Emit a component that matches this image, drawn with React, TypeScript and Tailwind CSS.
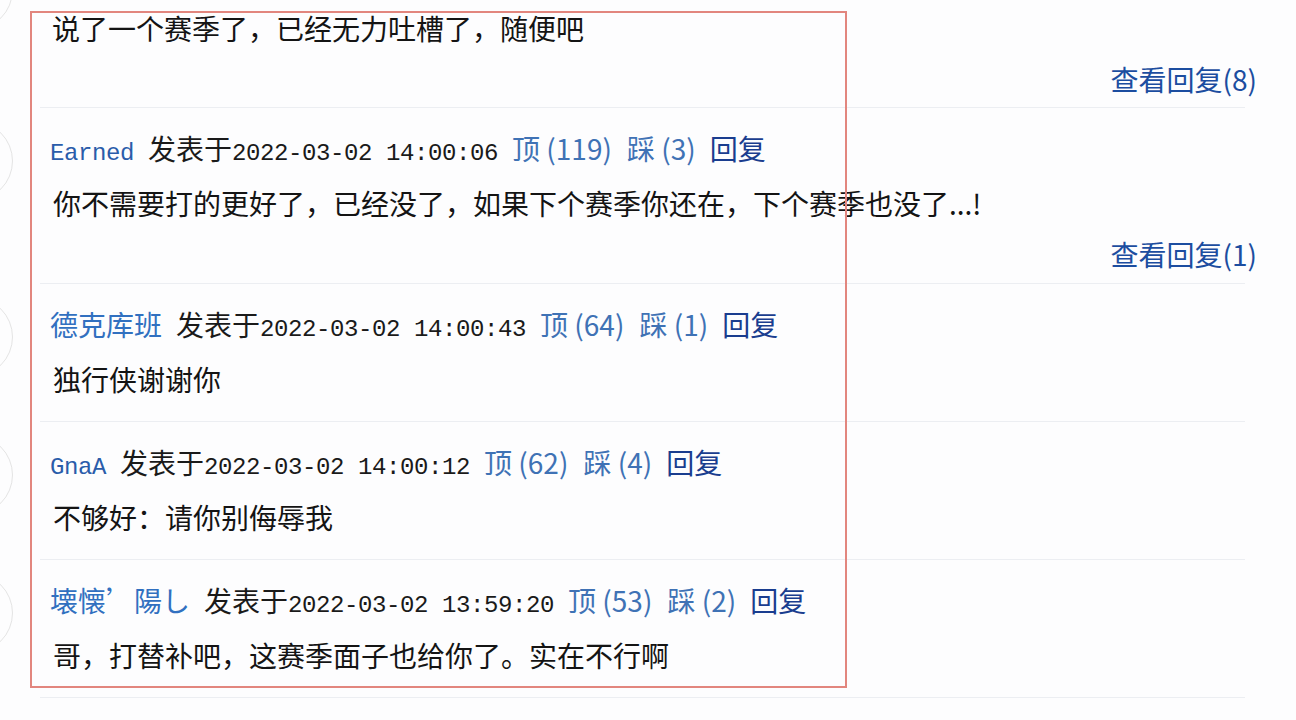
const CJK = "font-['Noto_Sans_CJK_SC',sans-serif]";
const MONO = "font-['Liberation_Mono','Noto_Sans_CJK_SC',monospace] text-[24px] tracking-[-0.4px]";

interface Comment {
  name: string;
  latinName?: boolean;
  nameColor: string;
  time: string;
  up: number;
  down: number;
  body: string;
  replies?: number;
}

const comments: Comment[] = [
  {
    name: "Earned",
    latinName: true,
    nameColor: "text-[#2a5caa]",
    time: "2022-03-02 14:00:06",
    up: 119,
    down: 3,
    body: "你不需要打的更好了，已经没了，如果下个赛季你还在，下个赛季也没了...!",
    replies: 1,
  },
  {
    name: "德克库班",
    nameColor: "text-[#3170c0]",
    time: "2022-03-02 14:00:43",
    up: 64,
    down: 1,
    body: "独行侠谢谢你",
  },
  {
    name: "GnaA",
    latinName: true,
    nameColor: "text-[#2a5caa]",
    time: "2022-03-02 14:00:12",
    up: 62,
    down: 4,
    body: "不够好：请你别侮辱我",
  },
  {
    name: "壊懐’陽し",
    nameColor: "text-[#3170c0]",
    time: "2022-03-02 13:59:20",
    up: 53,
    down: 2,
    body: "哥，打替补吧，这赛季面子也给你了。实在不行啊",
  },
];

function Separator() {
  return <div className="ml-[40px] h-px w-[1205px] bg-[#eceef2]" />;
}

function ViewReplies({ count }: { count: number }) {
  return (
    <div className={`flex h-[40px] items-center justify-end pr-[39px] text-[28px] leading-[40px] text-[#1c4da0] ${CJK}`}>
      查看回复({count})
    </div>
  );
}

function CommentRow({ c }: { c: Comment }) {
  return (
    <div className="flex">
      {/* avatar, mostly cut off by the left edge */}
      <div className="ml-[-67px] mt-[13px] h-[80px] w-[80px] shrink-0 rounded-full border border-[#e4e4e4]" />
      <div className="ml-[37px] flex-1 pt-[20px]">
        <div className={`flex h-[40px] items-baseline whitespace-nowrap text-[28px] leading-[40px] text-[#1a1a1a] ${CJK}`}>
          <span className={`${c.nameColor} ${c.latinName ? MONO : ""}`}>{c.name}</span>
          <span className="w-[14px]" />
          <span>发表于</span>
          <span className={MONO}>{c.time}</span>
          <span className="w-[14px]" />
          <span className="text-[#3f72b5]">顶 ({c.up})</span>
          <span className="w-[15px]" />
          <span className="text-[#3f72b5]">踩 ({c.down})</span>
          <span className="w-[14px]" />
          <span className="text-[#1a3d8f]">回复</span>
        </div>
        <div className={`mt-[15px] h-[40px] pl-[3px] whitespace-nowrap text-[28px] leading-[40px] text-[#141414] ${CJK}`}>
          {c.body}
        </div>
        {c.replies !== undefined ? (
          <div className="mt-[11px] pb-[9px]">
            <ViewReplies count={c.replies} />
          </div>
        ) : (
          <div className="h-[22px]" />
        )}
      </div>
    </div>
  );
}

export default function App() {
  return (
    <div className="relative h-[720px] w-[1296px] overflow-hidden bg-[#fdfdfe]">
      {/* tail of the previous comment */}
      <div className="flex">
        <div className="ml-[-67px] mt-[-50px] h-[80px] w-[80px] shrink-0 rounded-full border border-[#e4e4e4]" />
        <div className="ml-[37px] flex-1 pt-[8px]">
          <div className={`h-[40px] pl-[2px] whitespace-nowrap text-[28px] leading-[40px] text-[#141414] ${CJK}`}>
            说了一个赛季了，已经无力吐槽了，随便吧
          </div>
          <div className="mt-[11px] pb-[8px]">
            <ViewReplies count={8} />
          </div>
        </div>
      </div>
      <Separator />
      {comments.map((c) => (
        <div key={c.time}>
          <CommentRow c={c} />
          <Separator />
        </div>
      ))}

      {/* red highlight frame drawn over the list */}
      <div className="pointer-events-none absolute left-[30px] top-[11px] h-[677px] w-[817px] border-2 border-[#e2867e]" />
    </div>
  );
}
